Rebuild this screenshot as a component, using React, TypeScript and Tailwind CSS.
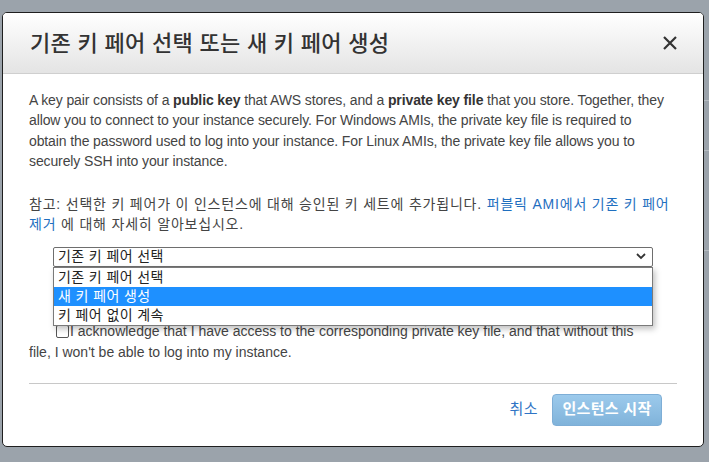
import React from "react";

const KR = { fontFamily: '"Liberation Sans", "Noto Sans CJK KR", Arial, sans-serif' };

export default function App() {
  return (
    <div className="w-[709px] h-[462px] bg-[#9ba3ab] overflow-hidden pt-[12px] pl-[2px] relative" style={KR}>
      <div className="absolute right-0 top-[100px] w-[6px] h-px bg-[#b6bcc2]" />
      <div className="absolute right-0 top-[150px] w-[6px] h-px bg-[#b6bcc2]" />
      <div className="absolute right-0 top-[250px] w-[6px] h-px bg-[#b6bcc2]" />
      <div className="relative w-[702px] h-[435px] bg-white border border-[#1f1f1f] rounded-[5px] overflow-hidden">
        {/* header */}
        <div className="h-[61px] border-b border-[#cfcfcf] bg-gradient-to-b from-[#ffffff] to-[#e4e4e4] flex items-center justify-between pl-[27px] pr-[25px]">
          <div className="text-[22px] text-[#333] font-medium tracking-[0.3px] pt-[1px]">기존 키 페어 선택 또는 새 키 페어 생성</div>
          <svg width="16" height="16" viewBox="0 0 16 16">
            <path d="M2 2 L14 14 M14 2 L2 14" stroke="#333" strokeWidth="2.2" strokeLinecap="butt" />
          </svg>
        </div>
        {/* body */}
        <div className="px-[26px] pt-[16px] text-[14px] text-[#444]">
          <p className="leading-[20.4px] tracking-[-0.12px] w-[642px]">
            A key pair consists of a <b className="text-[#333]">public key</b> that AWS stores, and a <b className="text-[#333]">private key file</b> that you store. Together, they allow you to connect to your instance securely. For Windows AMIs, the private key file is required to obtain the password used to log into your instance. For Linux AMIs, the private key file allows you to securely SSH into your instance.
          </p>
          <p className="leading-[20px] mt-[22px] tracking-[0.8px] w-[648px] break-keep">
            참고: 선택한 키 페어가 이 인스턴스에 대해 승인된 키 세트에 추가됩니다.{" "}
            <span className="text-[#1f6fbf]">퍼블릭 AMI에서 기존 키 페어 제거</span> 에 대해 자세히 알아보십시오.
          </p>
          <div className="relative ml-[24px] mt-[13px] w-[600px]">
            <div className="h-[20px] border border-[#6e6e6e] rounded-[2px] bg-white flex items-center justify-between pl-[4px] pr-[6px] text-[14px] text-[#222] tracking-[0.4px]">
              <span>기존 키 페어 선택</span>
              <svg width="10" height="7" viewBox="0 0 10 7">
                <path d="M1 1 L5 5 L9 1" stroke="#333" strokeWidth="1.8" fill="none" />
              </svg>
            </div>
            <div className="absolute left-0 top-[20px] w-[600px] border border-[#7a7a7a] bg-white shadow-[2px_3px_6px_rgba(0,0,0,0.25)] z-10 text-[14px] text-[#222] tracking-[0.4px]">
              <div className="h-[19px] leading-[19px] pl-[4px]">기존 키 페어 선택</div>
              <div className="h-[19px] leading-[19px] pl-[4px] bg-[#1e90ff] text-white">새 키 페어 생성</div>
              <div className="h-[19px] leading-[19px] pl-[4px]">키 페어 없이 계속</div>
            </div>
          </div>
          <p className="leading-[21px] mt-[54px] w-[618px]">
            <span className="inline-block w-[27px]" />
            <span className="inline-block w-[13px] h-[13px] border border-[#555] rounded-[2px] align-[-2px] mr-[1px] bg-white" />
            I acknowledge that I have access to the corresponding private key file, and that without this file, I won't be able to log into my instance.
          </p>
          <div className="h-px bg-[#c8c8c8] mt-[20px]" />
          <div className="flex justify-end items-center mt-[10px] pr-[15px]">
            <span className="text-[#2f74c5] text-[15px] mr-[14px] tracking-[0.5px]">취소</span>
            <div className="w-[110px] h-[32px] rounded-[4px] border border-[#7eaed6] bg-gradient-to-b from-[#9ccaec] to-[#80b3da] text-white font-bold text-[15px] flex items-center justify-center tracking-[0.3px]">
              인스턴스 시작
            </div>
          </div>
        </div>
      </div>
    </div>
  );
}
